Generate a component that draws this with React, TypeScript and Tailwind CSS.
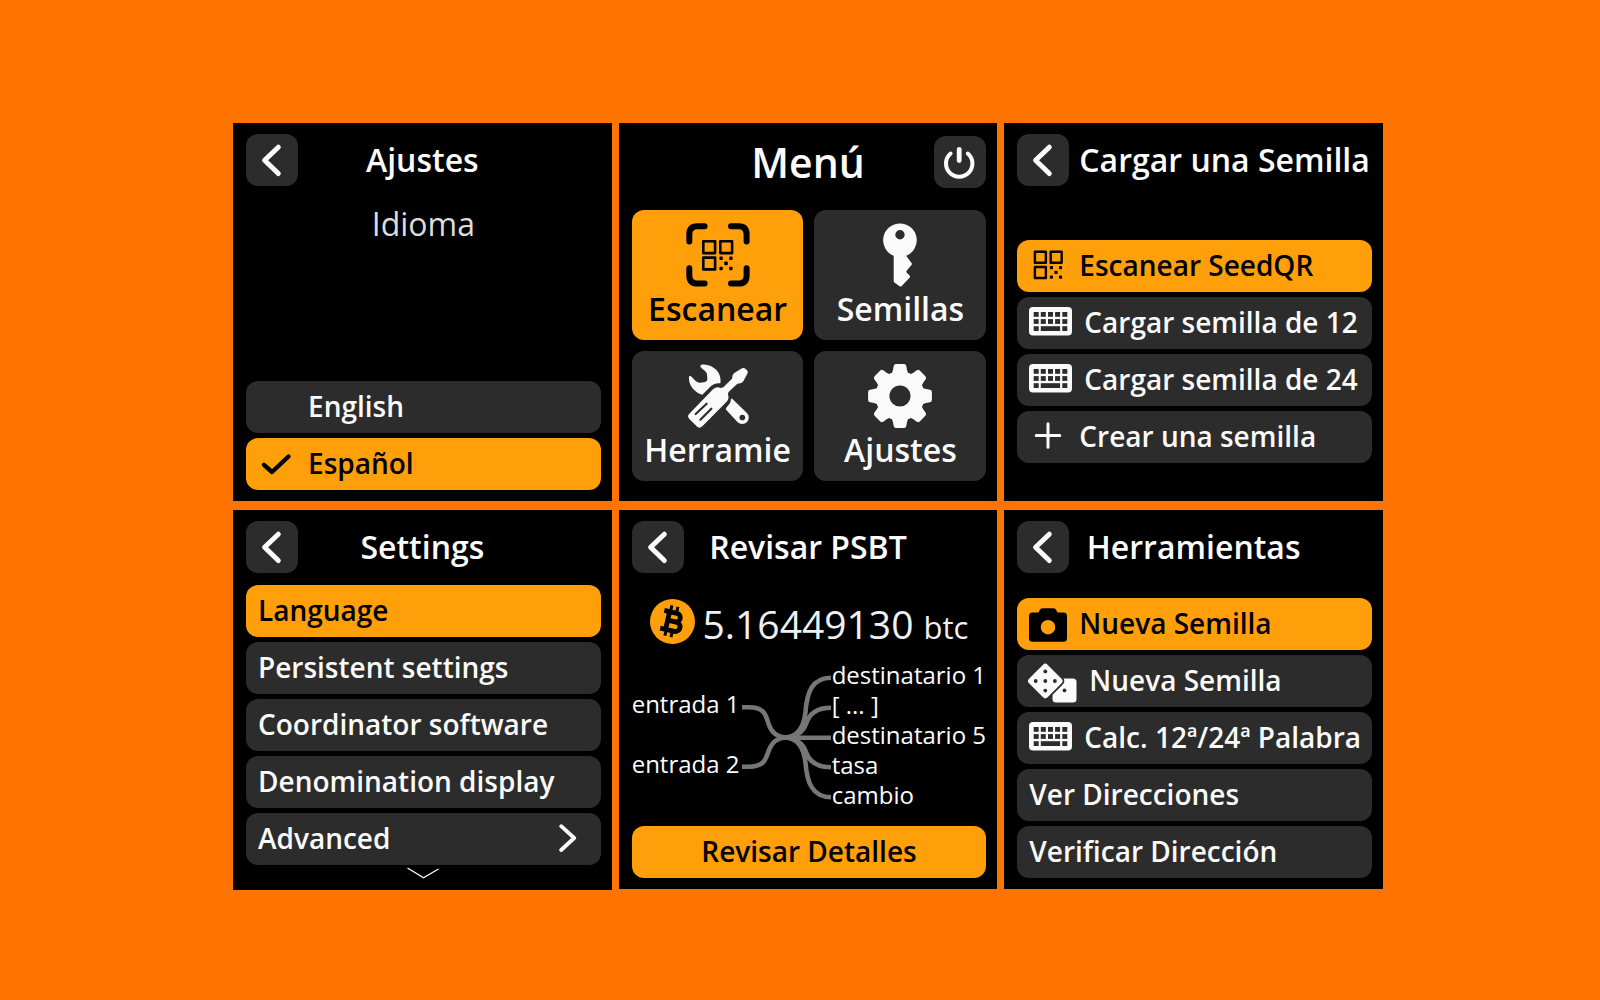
import type { ReactNode } from 'react';

const ACTIVE = 'bg-[#ff9f0a] text-black';
const IDLE = 'bg-[#2c2c2c] text-[#fafafa]';

function QrGlyph() {
  return (
    <g>
      <g fill="none" stroke="currentColor" strokeWidth="2.6" strokeLinejoin="round">
        <rect x="17.3" y="18.3" width="11.8" height="11.8" />
        <rect x="34.3" y="18.3" width="11.8" height="11.8" />
        <rect x="17.3" y="34.6" width="11.8" height="11.8" />
      </g>
      <g fill="currentColor">
        <rect x="33.4" y="33.6" width="3.4" height="3.4" rx="1" />
        <rect x="43.2" y="33.6" width="3.4" height="3.4" rx="1" />
        <rect x="38.2" y="38.6" width="3.6" height="3.6" rx="1" />
        <rect x="33.4" y="43.8" width="3.4" height="3.4" rx="1" />
        <rect x="43.2" y="43.8" width="3.4" height="3.4" rx="1" />
      </g>
    </g>
  );
}

function ScanIcon() {
  return (
    <svg viewBox="0 0 64 64" className="size-16" aria-hidden="true">
      <g fill="none" stroke="currentColor" strokeWidth="6" strokeLinecap="round">
        <path d="M3.3 18.6V11.5Q3.3 3.3 11.5 3.3H18.6" />
        <path d="M45 3.3H52.5Q60.6 3.3 60.6 11.5V18.6" />
        <path d="M60.6 45.3V52.5Q60.6 60.6 52.5 60.6H45" />
        <path d="M18.6 60.6H11.5Q3.3 60.6 3.3 52.5V45.3" />
      </g>
      <QrGlyph />
    </svg>
  );
}

function KeyIcon() {
  return (
    <svg viewBox="0 0 64 64" className="size-16" fill="currentColor" aria-hidden="true">
      <path
        fillRule="evenodd"
        d="M32 .4a16.8 16.8 0 0 1 6.2 32.4L43.7 40.2Q44.2 41 43.7 41.8L38.6 47.8Q38 48.7 38.6 49.5L41.8 52.8Q42.3 53.7 41.8 54.5L33.5 63.2Q32.5 64 31.6 63.2L26.4 59.6Q25.7 59 25.7 58V32.8A16.8 16.8 0 0 1 32 .4ZM32 7a4.7 4.7 0 1 0 0 9.4A4.7 4.7 0 0 0 32 7Z"
      />
    </svg>
  );
}

function ToolsIcon() {
  return (
    <svg viewBox="44 40 192 192" className="size-16" fill="currentColor" aria-hidden="true">
      <path d="M87 45C90 38 112 41 127 51C143 62 150 78 147 98C137 96 127 99 119 106L93 132C75 127 59 112 54 93C52 83 52 76 56 75C59 75 64 82 73 91Q79 97 88 96L101 94Q109 92 108 84L107 71Q107 66 101 61C93 54 86 51 87 45Z" />
      <path
        fillRule="evenodd"
        d="M179 144Q181 143 184 146L226 186A19 19 0 0 1 199 215L165 178Q162 175 165 171L174 160Q179 153 179 144ZM213 192a8.500 8.500 0 1 0 0 17a8.500 8.500 0 0 0 0-17Z"
      />
      <path d="M125 116Q135 106 148 112L156 110L182 84L184 74Q185 69 190 66L212 53Q218 50 222 54L227 59Q231 63 228 69L216 92Q213 97 207 98L198 99L171 125L170 133Q175 145 165 154L93 227Q84 235 76 227L54 205Q46 197 54 189Z" />
      <g stroke="#2c2c2c" strokeWidth="6.500" strokeLinecap="round">
        <path d="M73 190L106 159" />
        <path d="M87 207L120 174" />
      </g>
    </svg>
  );
}

function GearIcon() {
  return (
    <svg viewBox="-32 -32 64 64" className="size-16" fill="currentColor" aria-hidden="true">
      <path
        fillRule="evenodd"
        d="M0-24.500A24.500 24.500 0 1 0 0 24.500A24.500 24.500 0 1 0 0-24.500ZM0-10.600A10.600 10.600 0 1 1 0 10.600A10.600 10.600 0 1 1 0-10.600Z"
      />
      {[0, 45, 90, 135, 180, 225, 270, 315].map((angle) => (
        <path
          key={angle}
          transform={`rotate(${angle})`}
          d="M-9.500-21Q-7.500-23-7-26L-6.300-30Q-5.900-31.900-4-31.900H4Q5.900-31.900 6.300-30L7-26Q7.500-23 9.500-21Z"
        />
      ))}
    </svg>
  );
}

function RowIcon({ width = 38, children }: { width?: number; children: ReactNode }) {
  return (
    <svg
      width={width}
      height="42"
      viewBox={`0 0 ${width} 42`}
      className="shrink-0 overflow-visible"
      aria-hidden="true"
    >
      {children}
    </svg>
  );
}

const checkIcon = (
  <RowIcon>
    <path
      d="M6 22.800L14 30L30.500 14.500"
      fill="none"
      stroke="currentColor"
      strokeWidth="4.400"
      strokeLinecap="round"
      strokeLinejoin="round"
    />
  </RowIcon>
);

const qrIcon = (
  <RowIcon>
    <g transform="translate(-10.200 -9.200) scale(.93)">
      <QrGlyph />
    </g>
  </RowIcon>
);

const keyboardIcon = (
  <RowIcon width={43}>
    <rect x="0" y="6" width="43" height="28.600" rx="4" fill="currentColor" />
    <g fill="#2c2c2c">
      {[4.7, 11.8, 19, 26.100, 33.300].map((x) => (
        <g key={x}>
          <rect x={x} y="11" width="5" height="4.800" />
          <rect x={x} y="18.100" width="5" height="4.800" />
        </g>
      ))}
      <rect x="4.700" y="25.200" width="5" height="4.800" />
      <rect x="11.800" y="25.200" width="19.300" height="4.800" />
      <rect x="33.300" y="25.200" width="5" height="4.800" />
    </g>
  </RowIcon>
);

const plusIcon = (
  <RowIcon>
    <path d="M19 8.700V32.300M7.200 20.500H30.800" stroke="currentColor" strokeWidth="3" strokeLinecap="round" />
  </RowIcon>
);

const cameraIcon = (
  <RowIcon>
    <path
      fill="currentColor"
      fillRule="evenodd"
      d="M3.500 10.500H9.500L10.800 8Q11.500 6.300 13.500 6.300H24.500Q26.500 6.300 27.200 8L28.500 10.500H34.500Q38 10.500 38 14V36.200Q38 39.700 34.500 39.700H3.500Q0 39.700 0 36.200V14Q0 10.500 3.500 10.500ZM19 17.900a7.300 7.300 0 1 0 0 14.600a7.300 7.300 0 0 0 0-14.600Z"
    />
  </RowIcon>
);

const diceIcon = (
  <RowIcon width={48}>
    <rect x="23.500" y="19.500" width="24" height="24" rx="3.500" fill="currentColor" />
    <rect
      x="3.200"
      y="8.900"
      width="26.200"
      height="26.200"
      rx="3.200"
      transform="rotate(45 16.300 22)"
      fill="currentColor"
      stroke="#2c2c2c"
      strokeWidth="3.600"
      paintOrder="stroke"
    />
    <g fill="#2c2c2c">
      <circle cx="16.300" cy="12.400" r="1.900" />
      <circle cx="6.700" cy="22" r="1.900" />
      <circle cx="16.300" cy="22" r="1.900" />
      <circle cx="25.900" cy="22" r="1.900" />
      <circle cx="16.300" cy="31.600" r="1.900" />
      <circle cx="35.500" cy="31.400" r="1.900" />
    </g>
  </RowIcon>
);

function Screen({ children }: { children: ReactNode }) {
  return (
    <section className="flex aspect-square min-w-0 flex-col bg-black pt-[11px] pr-[11px] pb-[11px] pl-[13px]">
      {children}
    </section>
  );
}

function Header({ title, wide = false }: { title: string; wide?: boolean }) {
  return (
    <header className="grid grid-cols-[52px_1fr_54px] items-center">
      <button type="button" aria-label="Back" className="size-[52px] rounded-xl bg-[#2c2c2c] text-[#fcfcfc]">
        <svg viewBox="0 0 52 52" className="size-[52px]" aria-hidden="true">
          <path
            d="M32.300 13.200L18.600 26.300L32.300 39.500"
            fill="none"
            stroke="currentColor"
            strokeWidth="5"
            strokeLinecap="round"
            strokeLinejoin="round"
          />
        </svg>
      </button>
      <h2
        className={
          wide
            ? 'col-span-2 ml-[10px] text-[32px] leading-[44px] font-semibold whitespace-nowrap'
            : 'text-center text-[32px] leading-[44px] font-semibold whitespace-nowrap'
        }
      >
        {title}
      </h2>
    </header>
  );
}

function Row({
  children,
  icon,
  active = false,
  trailing,
}: {
  children: ReactNode;
  icon?: ReactNode;
  active?: boolean;
  trailing?: ReactNode;
}) {
  return (
    <button
      type="button"
      className={`flex h-[52px] w-full shrink-0 items-center gap-3 rounded-xl pb-0.5 pl-3 text-left ${active ? ACTIVE : IDLE}`}
    >
      {icon}
      <span className="flex-1 text-[28px] leading-[38px] font-semibold whitespace-nowrap">{children}</span>
      {trailing}
    </button>
  );
}

function Tile({ label, icon, active = false }: { label: string; icon: ReactNode; active?: boolean }) {
  return (
    <button
      type="button"
      className={`flex h-[130px] min-w-0 flex-col items-center gap-1 rounded-xl px-3 pt-[13px] ${active ? ACTIVE : IDLE}`}
    >
      {icon}
      <span className="text-[32px] leading-9 font-semibold whitespace-nowrap">{label}</span>
    </button>
  );
}

export default function App() {
  return (
    <main className="flex min-h-screen items-center justify-center bg-[#ff7400] pt-[13px] pl-4 font-['Open_Sans','Noto_Sans',sans-serif] text-[#fcfcfc]">
      <div className="grid w-full max-w-[1150px] grid-cols-3 gap-x-[7px] gap-y-[9px]">
        <Screen>
          <Header title="Ajustes" />
          <p className="mt-4 text-center text-[32px] leading-[44px] text-[#dcdcdc]">Idioma</p>
          <div className="mt-auto flex flex-col gap-[5px]">
            <Row icon={<RowIcon>{null}</RowIcon>}>English</Row>
            <Row active icon={checkIcon}>
              Español
            </Row>
          </div>
        </Screen>

        <Screen>
          <header className="grid grid-cols-[50px_1fr_52px] items-center pt-0.5">
            <h2 className="col-start-2 text-center text-[41px] leading-[50px] font-semibold">Menú</h2>
            <button type="button" aria-label="Power" className="size-[52px] rounded-xl bg-[#2c2c2c]">
              <svg viewBox="0 0 52 52" className="size-[52px]" aria-hidden="true">
                <g fill="none" stroke="currentColor" strokeLinecap="round">
                  <path d="M16.600 17.500A13.200 13.200 0 1 0 33.800 17.500" strokeWidth="4" />
                  <path d="M25.200 13.500V24.500" strokeWidth="4.800" />
                </g>
              </svg>
            </button>
          </header>
          <div className="mt-[22px] grid grid-cols-2 gap-[11px]">
            <Tile active label="Escanear" icon={<ScanIcon />} />
            <Tile label="Semillas" icon={<KeyIcon />} />
            <Tile label="Herramie" icon={<ToolsIcon />} />
            <Tile label="Ajustes" icon={<GearIcon />} />
          </div>
        </Screen>

        <Screen>
          <Header title="Cargar una Semilla" wide />
          <div className="mt-[54px] flex flex-col gap-[5px]">
            <Row active icon={qrIcon}>
              Escanear SeedQR
            </Row>
            <Row icon={keyboardIcon}>Cargar semilla de 12</Row>
            <Row icon={keyboardIcon}>Cargar semilla de 24</Row>
            <Row icon={plusIcon}>Crear una semilla</Row>
          </div>
        </Screen>

        <Screen>
          <Header title="Settings" />
          <div className="mt-3 flex flex-col gap-[5px]">
            <Row active>Language</Row>
            <Row>Persistent settings</Row>
            <Row>Coordinator software</Row>
            <Row>Denomination display</Row>
            <Row
              trailing={
                <svg viewBox="0 0 18 28" className="mr-6 h-7 w-[18px] shrink-0" aria-hidden="true">
                  <path
                    d="M2.200 2.200L15.200 14L2.200 26"
                    fill="none"
                    stroke="currentColor"
                    strokeWidth="3.800"
                    strokeLinecap="round"
                    strokeLinejoin="round"
                  />
                </svg>
              }
            >
              Advanced
            </Row>
          </div>
          <svg viewBox="0 0 32 12" className="mt-[2px] h-3 w-8 shrink-0 self-center" aria-hidden="true">
            <path d="M.5 1L16.500 10.800L31.500 2" fill="none" stroke="currentColor" strokeWidth="1.300" />
          </svg>
        </Screen>

        <Screen>
          <Header title="Revisar PSBT" />
          <div className="mt-4 flex items-center justify-center gap-2">
            <svg viewBox="0 0 45 45" className="size-[45px] shrink-0" aria-hidden="true">
              <circle cx="22.500" cy="22.500" r="22.500" fill="#ff9f0a" />
              <g transform="rotate(13 22.500 22.500)" fill="none" stroke="#000">
                <path
                  strokeWidth="4.800"
                  strokeLinejoin="round"
                  d="M12 13.500H25A4.400 4.400 0 0 1 25 22.300H18.500M18.500 22.300H26.500A4.700 4.700 0 0 1 26.500 31.700H12M17.500 13.500V31.700"
                />
                <path strokeWidth="3" d="M18.300 7V13M24.500 7V13M18.300 32V38M24.500 32V38" />
              </g>
            </svg>
            <p className="pt-2 text-[39px] leading-[53px] whitespace-nowrap text-[#f0f0f0]">
              5.16449130 <span className="text-[31px]">btc</span>
            </p>
          </div>
          <div className="mt-[6px] grid grid-cols-[110px_90px_1fr] items-center text-[24px] leading-[30px] whitespace-nowrap">
            <ul className="flex flex-col gap-[30px] pb-0.5">
              <li>entrada 1</li>
              <li>entrada 2</li>
            </ul>
            <svg viewBox="0 0 90 150" className="h-[150px] w-[90px]" aria-hidden="true">
              <g fill="none" stroke="#777777" strokeWidth="4.600">
                <path d="M0 47.300H7C24 47.300 24 57 27 65C30 73 36 77 43 77.500" />
                <path d="M0 106.700H7C24 106.700 24 97 27 90C30 82 36 78 43 77.500" />
                <path d="M43 77.500C56 77 62 66 63.500 52C65 32 70 18 89 17.700" />
                <path d="M43 77.500C54 77 61 72 64 64C67 54 74 47.700 89 47.700" />
                <path d="M43 77.700H89" />
                <path d="M43 77.500C54 78 61 84 64 92C67 101 74 107.300 89 107.300" />
                <path d="M43 77.500C56 78 62 89 63.500 103C65 122 70 137 89 137.300" />
              </g>
            </svg>
            <ul>
              <li>destinatario 1</li>
              <li>[ ... ]</li>
              <li>destinatario 5</li>
              <li>tasa</li>
              <li>cambio</li>
            </ul>
          </div>
          <button
            type="button"
            className="mt-auto h-[52px] shrink-0 rounded-xl bg-[#ff9f0a] pb-0.5 text-[28px] leading-[38px] font-semibold text-black"
          >
            Revisar Detalles
          </button>
        </Screen>

        <Screen>
          <Header title="Herramientas" />
          <div className="mt-auto flex flex-col gap-[5px]">
            <Row active icon={cameraIcon}>
              Nueva Semilla
            </Row>
            <Row icon={diceIcon}>Nueva Semilla</Row>
            <Row icon={keyboardIcon}>Calc. 12ª/24ª Palabra</Row>
            <Row>Ver Direcciones</Row>
            <Row>Verificar Dirección</Row>
          </div>
        </Screen>
      </div>
    </main>
  );
}
